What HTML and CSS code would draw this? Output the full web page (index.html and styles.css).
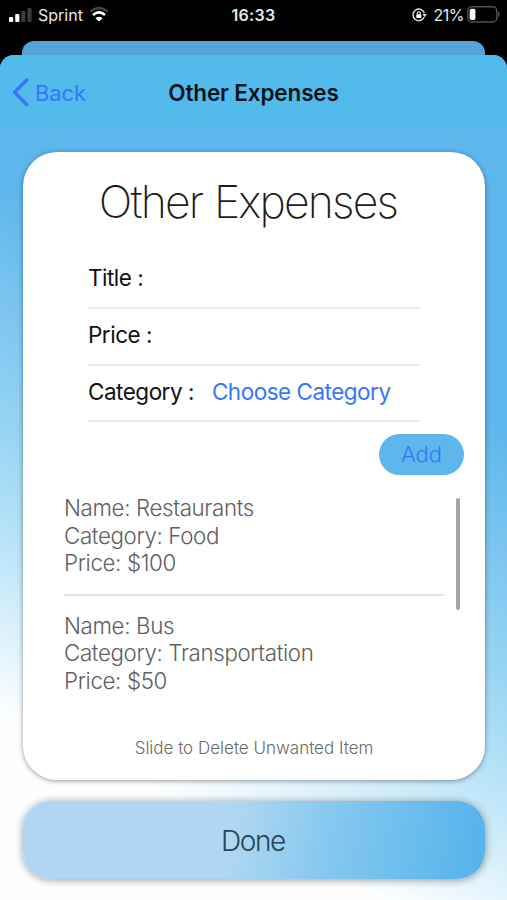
FILE: index.html
```html
<!DOCTYPE html>
<html lang="en">
<head>
<meta charset="utf-8">
<title>Other Expenses</title>
<link rel="stylesheet" href="styles.css">
</head>
<body>
<div class="phone">
  <div class="status">
    <div class="status-left">
      <svg width="23" height="15" viewBox="0 0 23 15"><rect x="0" y="10" width="4.2" height="5" rx="1" fill="#fff"/><rect x="6.2" y="7" width="4.2" height="8" rx="1" fill="#fff"/><rect x="12.2" y="4" width="4.2" height="11" rx="1" fill="#3c3c3c"/><rect x="18.4" y="1" width="4.2" height="14" rx="1" fill="#3c3c3c"/></svg>
      <span class="carrier">Sprint</span>
      <svg class="wifi" width="20" height="15" viewBox="0 0 20 15" fill="none"><path d="M1.3 4.5Q10-2.5 18.7 4.5" stroke="#454545" stroke-width="2.3"/><path d="M4 8Q10 2.8 16 8" stroke="#fff" stroke-width="2.7"/><path d="M6.4 11.2Q10 8.4 13.6 11.2L10 14.6Z" fill="#fff"/></svg>
    </div>
    <span class="time">16:33</span>
    <div class="status-right">
      <svg width="15" height="14" viewBox="0 0 15 14"><path d="M12.1 9.3A5.8 5.8 0 1 1 12.4 5.2" fill="none" stroke="#e4e4e4" stroke-width="1.4"/><path d="M10.5 6H14.8L12.6 9.3Z" fill="#e4e4e4"/><rect x="4.3" y="6.3" width="5" height="3.8" rx=".6" fill="#fff"/><path d="M5.3 6.5V5.2a1.5 1.5 0 0 1 3 0V6.5" fill="none" stroke="#fff" stroke-width="1.1"/></svg>
      <span class="percent">21%</span>
      <svg width="34" height="17" viewBox="0 0 34 17"><rect x=".8" y=".8" width="29" height="15.2" rx="4" fill="none" stroke="#505050" stroke-width="1.5"/><rect x="2.7" y="2.8" width="5.7" height="11.2" rx="1.7" fill="#fff"/><path d="M31.4 6Q33 8.3 31.4 10.8Z" fill="#505050" stroke="#505050"/></svg>
    </div>
  </div>
  <div class="sheet-behind"></div>
  <div class="sheet">
    <div class="nav">
      <div class="back">
        <svg width="17" height="29" viewBox="0 0 17 29"><path d="M14.7 2L2.6 14.3L14.7 26.6" fill="none" stroke="#3478f6" stroke-width="3.4" stroke-linecap="round" stroke-linejoin="round"/></svg>
        <span class="back-label">Back</span>
      </div>
      <span class="nav-title">Other Expenses</span>
    </div>
    <div class="card">
      <h1 class="title">Other Expenses</h1>
      <div class="form">
        <div class="field"><span>Title :</span></div>
        <div class="field"><span>Price :</span></div>
        <div class="field"><span>Category :</span><span class="choose">Choose Category</span></div>
      </div>
      <div class="add"><span>Add</span></div>
      <div class="list">
        <div class="items">
          <div class="item"><span>Name: Restaurants</span><span>Category: Food</span><span>Price: $100</span></div>
          <div class="item"><span>Name: Bus</span><span>Category: Transportation</span><span>Price: $50</span></div>
        </div>
        <div class="scrollbar"></div>
      </div>
      <div class="hint"><span>Slide to Delete Unwanted Item</span></div>
    </div>
    <div class="done"><span>Done</span></div>
  </div>
</div>
</body>
</html>
```

FILE: styles.css
```css
* { box-sizing: border-box; }
body { margin: 0; background: #000; font-family: Inter, "Liberation Sans", sans-serif; }
svg { display: block; flex: none; }
span { white-space: nowrap; }
.phone { width: 507px; height: 900px; overflow: hidden; display: flex; flex-direction: column; background: #000; }
.status { height: 41px; flex: none; display: grid; grid-template-columns: 1fr auto 1fr; padding: 0 6px 12px 9px; align-items: center; color: #e8e8e8; font-size: 16px; line-height: 20px; }
.status-left { display: flex; align-items: center; }
.carrier { margin-left: 6px; letter-spacing: 0; }
.wifi { margin-left: 6px; }
.time { font-weight: 600; letter-spacing: .3px; margin-right: 3px; }
.status-right { display: flex; align-items: center; justify-content: flex-end; }
.percent { margin: 0 3px 0 7px; letter-spacing: -.5px; }
.sheet-behind { height: 14px; flex: none; margin: 0 22px; background: #51a4d5; border-radius: 12px 12px 0 0; box-shadow: 0 14px 0 #51a4d5; }
.sheet { position: relative; flex: 1; border-radius: 14px 14px 0 0; background: linear-gradient(206deg, #5db6ec 0%, #5db6ec 34%, #98d5f3 57%, #b9e4f7 67%, #fdfeff 83%); overflow: hidden; }
.nav { height: 75px; display: grid; grid-template-columns: 1fr auto 1fr; align-items: center; padding: 0 12px; background: #52bbec; }
.back { display: flex; align-items: center; color: #3478f6; font-size: 22px; }
.back-label { margin-left: 6px; letter-spacing: -.1px; }
.nav-title { font-size: 22.5px; font-weight: 600; color: #06131b; letter-spacing: -.15px; }
.card { margin: 22px 22px 0 23px; height: 628px; border-radius: 34px; background: #fff; box-shadow: 0 1px 5px rgba(0,0,0,.4); display: flex; flex-direction: column; }
.title { margin: 22px 0 0; padding-right: 12px; font-size: 44.5px; line-height: 56px; font-weight: 200; text-align: center; letter-spacing: -1.8px; word-spacing: 1px; color: #1c1c1c; white-space: nowrap; }
.form { margin: 22px 65px 0; }
.field { height: 57px; display: flex; align-items: center; padding-bottom: 5px; border-bottom: 2px solid #e8e8e9; font-size: 22.5px; letter-spacing: -.5px; color: #111; }
.field:last-child { height: 56px; padding-bottom: 4px; }
.choose { margin-left: 18px; color: #3478f6; }
.add { flex: none; align-self: flex-end; margin: 12px 21px 0 0; padding-bottom: 1px; width: 85px; height: 41px; border-radius: 21px; background: #5db6ec; color: #3478f6; font-size: 22px; font-weight: 300; display: flex; align-items: center; justify-content: center; }
.list { flex: none; margin: 19px 25px 0 41px; height: 209px; display: flex; }
.items { width: 380px; }
.item { display: flex; flex-direction: column; font-size: 22.3px; line-height: 27.6px; font-weight: 300; letter-spacing: -.35px; color: #606060; padding-bottom: 17px; }
.item + .item { border-top: 2px solid #e3e3e5; padding-top: 16px; }
.scrollbar { margin: 4px 0 0 12px; width: 4px; height: 112px; border-radius: 2px; background: #a5a5a5; }
.hint { margin-top: 34px; text-align: center; font-size: 17px; line-height: 22px; font-weight: 300; color: #6a6a6a; }
.done { margin: 21px 22px 0 23px; height: 78px; border-radius: 28px; background: linear-gradient(100deg, #afd7f3 0%, #afd7f3 45%, #83c7ef 67%, #58b5ec 96%); box-shadow: 0 1px 8px rgba(0,0,0,.4); display: flex; align-items: center; justify-content: center; font-size: 28px; font-weight: 300; color: #294353; letter-spacing: -1.4px; padding: 2px 2px 0 0; }
```
